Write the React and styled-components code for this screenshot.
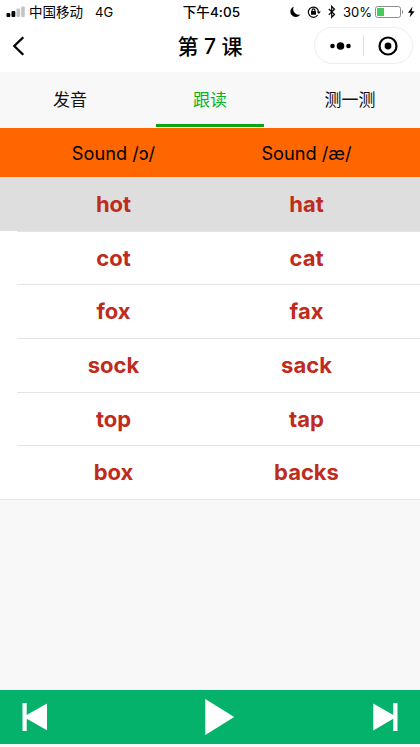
import * as React from "react";
import { useState } from "react";
import { createGlobalStyle, styled } from "styled-components";

const tabs = ["发音", "跟读", "测一测"];

const words = [
  ["hot", "hat"],
  ["cot", "cat"],
  ["fox", "fax"],
  ["sock", "sack"],
  ["top", "tap"],
  ["box", "backs"],
];

const GlobalStyle = createGlobalStyle`
  * {
    box-sizing: border-box;
  }
  body {
    margin: 0;
    background: #f8f8f8;
    color: #000;
    font-family: Inter, "Noto Sans CJK SC", sans-serif;
  }
  button {
    border: 0;
    padding: 0;
    background: none;
    color: inherit;
    font: inherit;
  }
  svg {
    display: block;
    flex: none;
  }
`;

const Screen = styled.div`
  display: flex;
  flex-direction: column;
  width: 420px;
  height: 747px;
  overflow: hidden;
`;

const StatusBar = styled.header`
  display: grid;
  grid-template-columns: 1fr auto 1fr;
  align-items: center;
  height: 23px;
  padding: 0 5px 0 6px;
  background: #fff;
  font-size: 13.5px;
  line-height: 22px;
`;

const StatusGroup = styled.div`
  display: flex;
  align-items: center;
  justify-content: ${(props) => (props.$end ? "flex-end" : "flex-start")};
  white-space: nowrap;
`;

const Carrier = styled.span`
  margin: 0 12px 0 4px;
`;

const Network = styled.span`
  font-size: 13px;
`;

const Time = styled.span`
  padding-left: 2px;
  font-size: 13.5px;
  font-weight: 500;
  letter-spacing: 0.1px;
`;

const Percent = styled.span`
  margin: 0 3px 0 7px;
  font-size: 13px;
`;

const NavBar = styled.nav`
  display: grid;
  grid-template-columns: 1fr auto 1fr;
  align-items: center;
  height: 49px;
  padding: 0 7px 4px 12px;
  background: #fff;
`;

const Title = styled.h1`
  margin: 0;
  padding: 2px 5px 0 0;
  font-size: 21px;
  font-weight: 500;
  line-height: 30px;
`;

const Capsule = styled.div`
  display: flex;
  align-items: center;
  justify-content: space-between;
  justify-self: end;
  width: 99px;
  height: 37px;
  padding: 0 14px 0 15px;
  border: 1px solid #ededed;
  border-radius: 19px;
`;

const Divider = styled.span`
  width: 1px;
  height: 21px;
  margin-left: -2px;
  background: #e2e2e2;
`;

const TabList = styled.div`
  display: flex;
  height: 56px;
  background: #f8f8f8;
`;

const Tab = styled.button`
  display: flex;
  flex: 1;
  flex-direction: column;
  align-items: center;
  justify-content: space-between;
  padding: 16px 16px 1px;
  color: ${(props) => (props.$active ? "#09b01f" : "#111")};
  font-size: 17px;
  line-height: 25px;
  &::after {
    content: "";
    width: 108px;
    height: 3px;
    background: ${(props) => (props.$active ? "#0aa514" : "transparent")};
  }
`;

const SoundRow = styled.div`
  display: grid;
  grid-template-columns: 1fr 1fr;
  align-items: center;
  height: 49px;
  padding: 0 17px;
  background: #ff6600;
  font-size: 18.2px;
  text-align: center;
`;

const WordList = styled.div`
  display: flex;
  flex-direction: column;
  height: 323px;
  border-bottom: 1px solid #e6e6e6;
  background: #fff;
`;

const WordRow = styled.button`
  flex: 1;
  padding-left: 17px;
  background: ${(props) => (props.$active ? "#dedede" : "#fff")};
`;

const WordPair = styled.span`
  display: grid;
  grid-template-columns: 1fr 1fr;
  align-items: center;
  height: 100%;
  padding: 0 17px 1px 0;
  border-top: 1px solid #e4e4e4;
  color: #be2c1d;
  font-size: 22px;
  font-weight: 700;
  ${WordRow}:first-child & {
    border-top-color: transparent;
  }
`;

const Player = styled.footer`
  display: grid;
  grid-template-columns: 1fr auto 1fr;
  align-items: center;
  height: 54px;
  margin: auto 0 3px;
  padding: 0 22px;
  background: #04b26b;
`;

const PlayerButton = styled.button`
  justify-self: ${(props) => props.$side};
`;

const PlayButton = styled(PlayerButton)`
  padding-left: 19px;
`;

function Signal() {
  return (
    <svg width="19" height="12" viewBox="0 0 19 12">
      <rect x="0.5" y="7" width="3.8" height="4" rx="1" />
      <rect x="5.5" y="5" width="3.8" height="6" rx="1" />
      <rect x="10.5" y="2.5" width="3.6" height="8.5" rx="1" fill="#c4c4c4" />
      <rect x="15.2" y="0.5" width="3.6" height="10.5" rx="1" fill="#c4c4c4" />
    </svg>
  );
}

function StatusIcons() {
  return (
    <svg width="48" height="14" viewBox="0 0 48 14">
      <path d="M5.8 1.6A5.4 5.4 0 1 0 12.4 9.4A5.6 5.6 0 0 1 5.8 1.6Z" />
      <g fill="none" stroke="#000" strokeWidth="1.2">
        <path d="M29.7 10A5.1 5.1 0 1 1 30.5 6.7" />
        <path d="M24.1 6.5V5.2A1.4 1.4 0 0 1 26.9 5.2V6.5" />
        <path d="M40.8 4L46.5 9.4L43.7 12.2V1.4L46.5 4.3L40.8 9.9" />
      </g>
      <rect x="23" y="6.1" width="5" height="3.7" rx="0.6" />
      <path d="M28.8 6.4H32.8L30.8 9Z" />
    </svg>
  );
}

function Battery() {
  return (
    <svg width="40" height="14" viewBox="0 0 40 14">
      <rect x="0.5" y="1.5" width="25" height="11" rx="2.2" fill="#fff" stroke="#8c8c8c" />
      <rect x="2" y="3" width="7" height="8" fill="#43cb5c" />
      <path d="M27 5C28.6 5.6 28.6 8.4 27 9Z" fill="#8c8c8c" />
      <path d="M37.6 1.6L33 7.7H35.8L34.6 12.5L39.6 6.2H36.5Z" />
    </svg>
  );
}

function BackIcon() {
  return (
    <svg width="14" height="22" viewBox="0 0 14 22">
      <path d="M11.3 2.2L2.3 11L11.3 19.8" fill="none" stroke="#000" strokeWidth="2.3" />
    </svg>
  );
}

function MoreIcon() {
  return (
    <svg width="21" height="8" viewBox="0 0 21 8">
      <circle cx="2.5" cy="4" r="2.3" />
      <circle cx="10.5" cy="4" r="3.8" />
      <circle cx="18.5" cy="4" r="2.3" />
    </svg>
  );
}

function CloseIcon() {
  return (
    <svg width="20" height="20" viewBox="0 0 20 20">
      <circle cx="10" cy="10" r="8.5" fill="none" stroke="#000" strokeWidth="2.2" />
      <circle cx="10" cy="10" r="3.4" />
    </svg>
  );
}

function PreviousIcon() {
  return (
    <svg width="26" height="28" viewBox="0 0 26 28" fill="#fff">
      <path d="M0.5 0H4.7V12L25 0.4V27.2L4.7 15.8V28H0.5Z" />
    </svg>
  );
}

function PlayIcon() {
  return (
    <svg width="30" height="36" viewBox="0 0 30 36" fill="#fff">
      <path d="M0.3 0L29.2 18L0.3 36Z" />
    </svg>
  );
}

function NextIcon() {
  return (
    <svg width="25" height="28" viewBox="0 0 25 28" fill="#fff">
      <path d="M24.5 0H20.2V12L0.3 0.4V27.4L20.2 15.8V28H24.5Z" />
    </svg>
  );
}

export default function App() {
  const [tab, setTab] = useState(1);
  const [current, setCurrent] = useState(0);

  function step(amount) {
    setCurrent((current + amount + words.length) % words.length);
  }

  return (
    <>
      <GlobalStyle />
      <Screen>
        <StatusBar>
          <StatusGroup>
            <Signal />
            <Carrier>中国移动</Carrier>
            <Network>4G</Network>
          </StatusGroup>
          <Time>下午4:05</Time>
          <StatusGroup $end>
            <StatusIcons />
            <Percent>30%</Percent>
            <Battery />
          </StatusGroup>
        </StatusBar>
        <NavBar>
          <button>
            <BackIcon />
          </button>
          <Title>第 7 课</Title>
          <Capsule>
            <MoreIcon />
            <Divider />
            <CloseIcon />
          </Capsule>
        </NavBar>
        <TabList>
          {tabs.map((name, index) => (
            <Tab key={name} $active={index === tab} onClick={() => setTab(index)}>
              {name}
            </Tab>
          ))}
        </TabList>
        <SoundRow>
          <span>Sound /ɔ/</span>
          <span>Sound /æ/</span>
        </SoundRow>
        <WordList>
          {words.map(([left, right], index) => (
            <WordRow
              key={left}
              $active={index === current}
              onClick={() => setCurrent(index)}
            >
              <WordPair>
                <span>{left}</span>
                <span>{right}</span>
              </WordPair>
            </WordRow>
          ))}
        </WordList>
        <Player>
          <PlayerButton $side="start" onClick={() => step(-1)}>
            <PreviousIcon />
          </PlayerButton>
          <PlayButton $side="center">
            <PlayIcon />
          </PlayButton>
          <PlayerButton $side="end" onClick={() => step(1)}>
            <NextIcon />
          </PlayerButton>
        </Player>
      </Screen>
    </>
  );
}
